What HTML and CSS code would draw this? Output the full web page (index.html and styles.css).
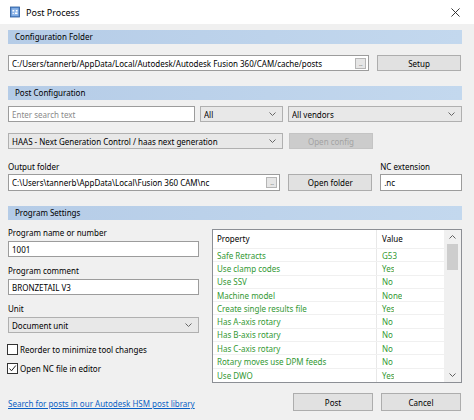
FILE: index.html
```html
<!DOCTYPE html>
<html>
<head>
<meta charset="utf-8">
<link rel="stylesheet" href="styles.css">
</head>
<body>
<div class="titlebar">
  <svg class="app-icon" viewBox="0 0 12 13"><rect x="0.5" y="0.5" width="11" height="12" fill="#5b8fd3" stroke="#2f5f9e"/><rect x="2" y="2" width="8" height="9" fill="#8fb6e8"/><path d="M3 4h2v2H3zM7 4h2v2H7zM3 8h2v1H3zM6 7h3v2H6z" fill="#fff"/></svg>
  <span class="title">Post Process</span>
  <svg class="close" viewBox="0 0 10 10"><path d="M0.5 0.5L9.5 9.5M9.5 0.5L0.5 9.5" stroke="#222" stroke-width="1"/></svg>
</div>
<div class="content">
  <div class="section-header first">Configuration Folder</div>
  <div class="row row-config">
    <div class="input w-config"><span class="txt">C:/Users/tannerb/AppData/Local/Autodesk/Autodesk Fusion 360/CAM/cache/posts</span><span class="browse">...</span></div>
    <div class="btn w-btn">Setup</div>
  </div>

  <div class="section-header">Post Configuration</div>
  <div class="row row-search">
    <div class="input w-search placeholder"><span class="txt">Enter search text</span></div>
    <div class="select w-all"><span class="txt">All</span><svg class="chev" viewBox="0 0 7 4"><path d="M0.5 0.5L3.5 3.5L6.5 0.5" fill="none" stroke="#666"/></svg></div>
    <div class="select w-vendors"><span class="txt">All vendors</span><svg class="chev" viewBox="0 0 7 4"><path d="M0.5 0.5L3.5 3.5L6.5 0.5" fill="none" stroke="#666"/></svg></div>
  </div>
  <div class="row row-post">
    <div class="select w-post"><span class="txt">HAAS - Next Generation Control / haas next generation</span><svg class="chev" viewBox="0 0 7 4"><path d="M0.5 0.5L3.5 3.5L6.5 0.5" fill="none" stroke="#666"/></svg></div>
    <div class="btn w-btn disabled">Open config</div>
  </div>
  <div class="row row-output">
    <div class="field w-output">
      <div class="label">Output folder</div>
      <div class="input tall"><span class="txt">C:\Users\tannerb\AppData\Local\Fusion 360 CAM\nc</span><span class="browse">...</span></div>
    </div>
    <div class="btn w-btn tall">Open folder</div>
    <div class="field w-ext">
      <div class="label">NC extension</div>
      <div class="input tall"><span class="txt">.nc</span></div>
    </div>
  </div>

  <div class="section-header">Program Settings</div>
  <div class="settings">
    <div class="left">
      <div class="label">Program name or number</div>
      <div class="input field-input"><span class="txt">1001</span></div>
      <div class="label next">Program comment</div>
      <div class="input field-input"><span class="txt">BRONZETAIL V3</span></div>
      <div class="label next">Unit</div>
      <div class="select field-input"><span class="txt">Document unit</span><svg class="chev" viewBox="0 0 7 4"><path d="M0.5 0.5L3.5 3.5L6.5 0.5" fill="none" stroke="#666"/></svg></div>
      <div class="check first-check"><span class="box"></span><span>Reorder to minimize tool changes</span></div>
      <div class="check"><span class="box"><svg viewBox="0 0 9 9"><path d="M1.5 4.5L3.5 6.8L7.8 1.5" fill="none" stroke="#222" stroke-width="1"/></svg></span><span>Open NC file in editor</span></div>
    </div>
    <div class="props">
      <div class="props-table">
        <div class="prow head"><div class="pcell name">Property</div><div class="pcell val">Value</div></div>
        <div class="prow"><div class="pcell name">Safe Retracts</div><div class="pcell val">G53</div></div>
        <div class="prow"><div class="pcell name">Use clamp codes</div><div class="pcell val">Yes</div></div>
        <div class="prow"><div class="pcell name">Use SSV</div><div class="pcell val">No</div></div>
        <div class="prow"><div class="pcell name">Machine model</div><div class="pcell val">None</div></div>
        <div class="prow"><div class="pcell name">Create single results file</div><div class="pcell val">Yes</div></div>
        <div class="prow"><div class="pcell name">Has A-axis rotary</div><div class="pcell val">No</div></div>
        <div class="prow"><div class="pcell name">Has B-axis rotary</div><div class="pcell val">No</div></div>
        <div class="prow"><div class="pcell name">Has C-axis rotary</div><div class="pcell val">No</div></div>
        <div class="prow"><div class="pcell name">Rotary moves use DPM feeds</div><div class="pcell val">No</div></div>
        <div class="prow"><div class="pcell name">Use DWO</div><div class="pcell val">Yes</div></div>
      </div>
      <div class="scrollbar">
        <svg class="arrow" viewBox="0 0 7 4"><path d="M0.5 3.5L3.5 0.5L6.5 3.5" fill="none" stroke="#606060"/></svg>
        <div class="thumb"></div>
        <div class="track"></div>
        <svg class="arrow" viewBox="0 0 7 4"><path d="M0.5 0.5L3.5 3.5L6.5 0.5" fill="none" stroke="#606060"/></svg>
      </div>
    </div>
  </div>

  <div class="footer">
    <a class="link" href="#">Search for posts in our Autodesk HSM post library</a>
    <div class="buttons">
      <div class="btn w-action">Post</div>
      <div class="btn w-action">Cancel</div>
    </div>
  </div>
</div>
</body>
</html>
```

FILE: styles.css
```css
* { box-sizing: border-box; }
html, body { margin: 0; padding: 0; }
body {
  width: 474px;
  height: 420px;
  overflow: hidden;
  background: #f0f0f0;
  font-family: "Noto Sans", sans-serif;
  font-size: 8px;
  color: #000;
}
.titlebar {
  height: 24px;
  background: #fff;
  display: flex;
  align-items: center;
  padding-left: 10px;
}
.app-icon { width: 10px; height: 12px; margin-right: 6px; }
.title { font-size: 9px; }
.close { width: 9px; height: 9px; margin-left: auto; margin-right: 14px; }

.content {
  padding: 0 12px 0 8px;
  display: flex;
  flex-direction: column;
}
.section-header {
  height: 14px;
  line-height: 14px;
  margin-top: 15px;
  padding-left: 7px;
  background: linear-gradient(to right, #b5cce7, #c3d8ee);
}
.section-header.first { margin-top: 6px; }

.row { display: flex; align-items: flex-end; }
.row-config { margin-top: 11px; gap: 8px; }
.row-search { margin-top: 6px; gap: 5px; }
.row-post { margin-top: 11px; gap: 6px; }
.row-output { margin-top: 12px; gap: 8px; }

.input, .select, .btn {
  height: 16px;
  display: flex;
  align-items: center;
  white-space: nowrap;
  overflow: hidden;
}
.input {
  background: #fff;
  border: 1px solid #9c9c9c;
  padding-left: 3px;
}
.input .txt, .select .txt { flex: 1; overflow: hidden; }
.placeholder { color: #8a8a8a; }
.select {
  background: #e8e8e8;
  border: 1px solid #b0b0b0;
  padding-left: 3px;
  padding-right: 6px;
}
.chev { width: 7px; height: 4px; flex: none; }
.btn {
  justify-content: center;
  background: #e1e1e1;
  border: 1px solid #adadad;
}
.btn.disabled {
  background: #cccccc;
  border-color: #c4c4c4;
  color: #a3a3a3;
}
.browse {
  flex: none;
  width: 11px;
  height: 11px;
  margin-right: 2px;
  border: 1px solid #b5b5b5;
  background: #e6e6e6;
  color: #777;
  font-size: 6px;
  line-height: 10px;
  text-align: center;
  letter-spacing: -0.5px;
}
.tall { height: 17px; }

.w-config { width: 361px; }
.w-btn { width: 84px; }
.w-search { width: 187px; }
.w-all { width: 83px; }
.w-vendors { width: 174px; }
.w-post { width: 275px; }
.w-output { width: 273px; }
.w-ext { width: 82px; }
.w-action { width: 80px; height: 18px; }

.field { display: flex; flex-direction: column; }
.label { height: 12px; line-height: 12px; margin-bottom: 1px; }

.settings {
  margin-top: 7px;
  display: flex;
  gap: 13px;
  align-items: flex-start;
}
.left { width: 191px; display: flex; flex-direction: column; }
.left .label { margin-bottom: 2px; }
.left .label.next { margin-top: 8px; }
.field-input { height: 16px; }
.check { display: flex; align-items: center; height: 12px; margin-top: 7px; }
.check.first-check { margin-top: 10px; }
.box {
  width: 11px;
  height: 11px;
  border: 1px solid #333;
  background: #fff;
  margin-left: -1px;
  margin-right: 2px;
  display: flex;
  align-items: center;
  justify-content: center;
}
.box svg { width: 9px; height: 9px; }

.props {
  margin-top: 2px;
  width: 250px;
  height: 154px;
  border: 1px solid #8c8f95;
  background: #fff;
  display: flex;
}
.props-table { flex: 1; display: flex; flex-direction: column; }
.prow {
  display: flex;
  height: 13.33px;
  border-bottom: 1px solid #f0f0f0;
  color: #339933;
  align-items: center;
}
.prow.head { height: 19px; color: #000; }
.prow:last-child { border-bottom: none; }
.pcell { white-space: nowrap; overflow: hidden; }
.pcell.name { width: 164px; padding-left: 4px; border-right: 1px solid #e8e8e8; height: 100%; display: flex; align-items: center; }
.pcell.val { padding-left: 5px; }

.scrollbar {
  width: 17px;
  background: #f0f0f0;
  display: flex;
  flex-direction: column;
  align-items: center;
}
.scrollbar .arrow { width: 7px; height: 4px; margin: 5px 0; flex: none; }
.thumb { width: 11px; height: 26px; background: #cdcdcd; flex: none; }
.track { flex: 1; }

.footer {
  margin-top: 10px;
  display: flex;
  align-items: center;
  justify-content: space-between;
}
.link {
  color: #0b5fc4;
  text-decoration: underline;
  padding-top: 3px;
}
.buttons { display: flex; gap: 8px; margin-right: 1px; }
```
